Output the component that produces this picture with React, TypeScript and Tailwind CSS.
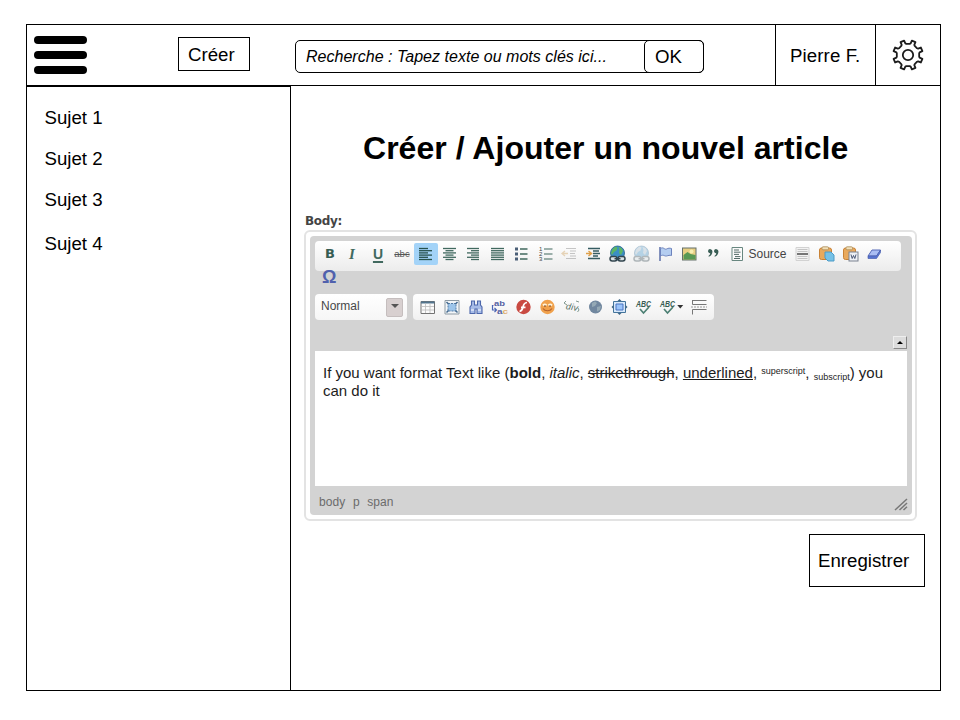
import React from 'react';

const sans = "font-['Liberation_Sans',Arial,sans-serif]";

function Icon({ children, className = '' }: { children: React.ReactNode; className?: string }) {
  return (
    <svg viewBox="0 0 24 24" className={`h-6 w-6 shrink-0 ${className}`} fill="none">
      {children}
    </svg>
  );
}

const G = '#41695f';

function Lines({ rows, color = G }: { rows: [number, number][]; color?: string }) {
  return (
    <Icon>
      {rows.map(([a, b], i) => (
        <path key={i} d={`M${a} ${6.5 + i * 2.2}H${b}`} stroke={color} strokeWidth="1.3" />
      ))}
    </Icon>
  );
}

function Globe({ faded = false }: { faded?: boolean }) {
  return (
    <Icon className={faded ? 'opacity-35' : ''}>
      <circle cx="11.500" cy="11" r="7" fill="#3b8fc4" stroke="#235e8c" strokeWidth=".8" />
      <path d="M6.500 7l3-2.400 2 1-1 3-2.500 1.500-2 3-1-2zM12.500 5l3 1 1.500 3-2 4-2-2 .5-3z" fill={faded ? '#9fb7c9' : '#5cb565'} />
      <rect x="4" y="14.500" width="7" height="4.500" rx="2.200" fill="#d9e2e5" stroke="#33464f" strokeWidth="1.500" />
      <rect x="12" y="14.500" width="7" height="4.500" rx="2.200" fill="#d9e2e5" stroke="#33464f" strokeWidth="1.500" />
      <path d="M8.500 16.700h6" stroke="#33464f" strokeWidth="1.500" />
    </Icon>
  );
}

function SpellText() {
  return (
    <>
      <text x="11.500" y="12" textAnchor="middle" fontSize="9" fontWeight="700" fontStyle="italic" textLength="15" lengthAdjust="spacingAndGlyphs" fill="#365c52">ABC</text>
      <path d="M8 14l3.500 4 5.500-6" stroke="#4d8074" strokeWidth="1.700" />
    </>
  );
}

function Clipboard({ word = false }: { word?: boolean }) {
  return (
    <Icon>
      <rect x="4.500" y="6" width="12" height="11.500" rx="2" fill="#e9a95c" stroke="#c98235" />
      <rect x="7" y="4.800" width="6.500" height="3" rx="1" fill="#f2e0b8" stroke="#a98a58" strokeWidth=".8" />
      {word ? (
        <>
          <rect x="10" y="10" width="9" height="9" fill="#eef0f4" stroke="#7b8290" />
          <path d="M12 12.500l1.200 4 1.300-3 1.300 3 1.200-4" stroke="#4b5875" />
        </>
      ) : (
        <path d="M10 10h6l3 3v6h-6l-3-3z" fill="#76c1e6" stroke="#4c9bc7" />
      )}
    </Icon>
  );
}

function Gear() {
  const pts: string[] = [];
  for (let i = 0; i < 8; i++) {
    const base = i * 45 + 22.5;
    for (const [off, r] of [[-14, 11.3], [-9.5, 11.9], [-7.5, 14.9], [7.5, 14.9], [9.5, 11.9], [14, 11.3]]) {
      const a = ((base + off) * Math.PI) / 180;
      pts.push(`${(16 + r * Math.cos(a)).toFixed(2)},${(16 + r * Math.sin(a)).toFixed(2)}`);
    }
  }
  return (
    <svg viewBox="0 0 32 32" className="h-8 w-8" fill="none" stroke="#1c1c1c" strokeWidth="1.8" strokeLinejoin="round">
      <polygon points={pts.join(' ')} />
      <circle cx="16" cy="16" r="5.2" />
    </svg>
  );
}

function MainTools() {
  return (
    <div className="flex h-[30px] w-[586px] items-center rounded-[4px] bg-linear-to-b from-white to-[#ececec] pl-[3px] pb-[4px]">
      <span className="w-6 text-center font-['DejaVu_Sans',sans-serif] text-[13px] font-bold leading-6 text-[#365c52]">B</span>
      <span className="w-6 pr-1 text-center font-['Liberation_Serif',serif] text-[15px] font-bold italic leading-6 text-[#41695f]">I</span>
      <span className="w-6 text-center text-[14px] font-bold leading-6 text-[#41695f] underline decoration-[1.5px] underline-offset-2">U</span>
      <span className="w-6 text-center text-[9.500px] leading-6 text-[#555] line-through">abc</span>
      <span className="flex h-[22px] w-6 items-center rounded-[2px] bg-[#a3d3f8]">
        <Lines rows={[[5, 14], [5, 18], [5, 14], [5, 18], [5, 14], [5, 18]]} color="#26514c" />
      </span>
      <Lines rows={[[5, 18], [7.5, 15.5], [5, 18], [7.5, 15.5], [5, 18], [7.5, 15.5]]} />
      <Lines rows={[[5, 17], [9, 17], [5, 17], [9, 17], [5, 17], [9, 17]]} />
      <Lines rows={[[5, 18], [5, 18], [5, 18], [5, 18], [5, 18], [5, 18]]} />
      <Icon>
        <path d="M10 7h7.500M10 12h7.500M10 17h7.500" stroke={G} strokeWidth="1.300" />
        <path d="M5 5.500h3v3H5zM5 10.500h3v3H5zM5 15.500h3v3H5z" fill="#4b5f77" />
      </Icon>
      <Icon>
        <path d="M10 7h8.500M10 12h8.500M10 17h8.500" stroke={G} strokeWidth="1.200" />
        <text x="5" y="9" fontSize="6" fill="#444">1</text>
        <text x="5" y="14" fontSize="6" fill="#444">2</text>
        <text x="5" y="19" fontSize="6" fill="#444">3</text>
      </Icon>
      <Icon className="opacity-35">
        <path d="M8 6.500h10M12 9h6M12 11.500h5M12 14h6M8 16.500h10" stroke="#666" strokeWidth="1.200" />
        <path d="M10 11.500H5M7 9l-3 2.500 3 2.500" stroke="#c99342" strokeWidth="1.300" />
      </Icon>
      <Icon>
        <path d="M6 6.500h12M11 9h6M11 11.500h7M11 14h5M6 16.500h12" stroke="#365c62" strokeWidth="1.300" />
        <path d="M4 11.500h5M6.500 9l3 2.500-3 2.500" stroke="#dfa04a" strokeWidth="1.500" />
      </Icon>
      <Globe />
      <Globe faded />
      <Icon>
        <path d="M6 5v14" stroke="#5c6fa8" strokeWidth="1.500" />
        <path d="M6.500 6.500c3-2 4 1.500 6 .5s3-1 5-.5v7c-2-.5-3 0-5 .5s-3-2-6 0z" fill="#b4cdf0" stroke="#6d83bd" />
      </Icon>
      <Icon>
        <rect x="4.500" y="6" width="13.500" height="12" fill="#e8cf82" stroke="#65716b" />
        <path d="M5.500 13l4-3 3 2 5 1v4.500h-12z" fill="#599954" />
        <circle cx="13.500" cy="9.500" r="2" fill="#f7efb1" />
      </Icon>
      <Icon>
        <path d="M6 9a2.200 2.200 0 1 1 4.400.7c0 2.500-1.600 4.200-3.600 5l-.3-.8c1-.7 1.700-1.600 1.700-2.700C6.800 11.200 6 10.200 6 9zM12 9a2.200 2.200 0 1 1 4.400.7c0 2.500-1.600 4.200-3.600 5l-.3-.8c1-.7 1.700-1.600 1.700-2.700-1.400 0-2.200-1-2.200-2.200z" fill="#395e55" />
      </Icon>
      <Icon>
        <path d="M6 5.500h10.500v13H6z" fill="#fafafa" stroke="#688780" />
        <path d="M8 8h5M8 10.200h6.500M8 12.400h5M9 14.600h5.500M8 16.500h6" stroke="#536b67" />
      </Icon>
      <span className="ml-[-1.500px] w-[42.500px] shrink-0 text-[12px] leading-6 text-[#444]">Source</span>
      <Icon>
        <path d="M5 5.500h13v13H5z" fill="#f2f2f2" stroke="#d2d2d2" />
        <path d="M6.500 7.500h10M6.500 9.500h10M6.500 14.500h10M6.500 16.500h10" stroke="#b8b8b8" strokeWidth=".8" />
        <path d="M6 12h11" stroke="#555" strokeWidth="1.600" />
      </Icon>
      <Clipboard />
      <Clipboard word />
      <Icon>
        <path d="M9 8h8.500l-4 6H5z" fill="#a9bdf3" stroke="#566ab8" />
        <path d="M5 14h8.500l4-6v2.500l-4 6H5z" fill="#5674d3" stroke="#4b60ae" strokeWidth=".7" />
      </Icon>
    </div>
  );
}

function ExtraTools() {
  return (
    <div className="flex h-[26px] w-[301px] items-center rounded-[4px] bg-linear-to-b from-white to-[#f0f0f0] pl-[2.500px]">
      <Icon>
        <path d="M5 6.500h13.500v12H5z" fill="#fbfbfb" stroke="#737373" />
        <path d="M5 7.500h13.500" stroke="#52758e" strokeWidth="2" />
        <path d="M9.500 8v10M14 8v10M5.500 11.500H18M5.500 15H18" stroke="#bbb" strokeWidth=".8" />
      </Icon>
      <Icon>
        <path d="M5 5.500h14v13.500H5z" fill="#f3f6f8" stroke="#8d9aa4" />
        <path d="M8 8.500h8v7.500H8z" fill="#9dc5ea" stroke="#557da7" strokeDasharray="2 1" />
        <path d="M6.500 7l2 2m9-2l-2 2m-9 8.500l2-2m9 2l-2-2" stroke="#456a8e" strokeWidth="1.500" />
      </Icon>
      <Icon>
        <path d="M7.500 6h3v4h3V6h3v4l1.500 2v6.500h-5V14h-2v4.500H6V12l1.500-2z" fill="#a7bce8" stroke="#4d67ab" strokeWidth="1.100" />
        <path d="M7 15h3M14 15h3" stroke="#fff" />
      </Icon>
      <Icon>
        <text x="6" y="10.500" fontSize="8" fontWeight="700" textLength="11" lengthAdjust="spacingAndGlyphs" fill="#5562a3">ab</text>
        <text x="9" y="19" fontSize="8" fontWeight="700" textLength="11" lengthAdjust="spacingAndGlyphs" fill="#5562a3">a<tspan fill="#dfad70">c</tspan></text>
        <path d="M5.500 10.500H4.500V15h4M6.500 12.800l2 2.200-2 2.200" stroke="#4b65b5" strokeWidth="1.200" />
      </Icon>
      <Icon>
        <circle cx="11.500" cy="12" r="7.200" fill="#c94a42" />
        <path d="M15 7.500c-3 .3-3.500 2-4 4.500s-1 4-3.500 4.500M9 12.300h4.500" stroke="#fff" strokeWidth="1.700" />
      </Icon>
      <Icon>
        <circle cx="11.500" cy="12" r="7.200" fill="#f0a14c" />
        <path d="M7 10.500c1-1 2.500-1 3.500 0M12.500 10.500c1-1 2.500-1 3.500 0" stroke="#fff3d8" strokeWidth="2" />
        <path d="M7 13.500c2 3 7 3 9 0" stroke="#b4622c" strokeWidth="1.200" />
        <circle cx="9" cy="11" r=".8" fill="#643018" /><circle cx="14" cy="11" r=".8" fill="#643018" />
      </Icon>
      <Icon>
        <path d="M6 6L4 8l3 2M16 6l3 1M18 13l1 2-1.500 2" stroke="#829990" />
        <text x="6" y="15" fontSize="9" fontStyle="italic" textLength="12" fill="#587268" transform="rotate(10 12 12)">div</text>
      </Icon>
      <Icon>
        <circle cx="11.500" cy="12" r="6.500" fill="#71879f" />
        <path d="M8 8l3-1.500 2 1.500-2 3-3 1zM13 12l4-1-1 4-3 1.500z" fill="#95a9b5" />
      </Icon>
      <Icon>
        <path d="M5.500 6.500h12v11h-12z" stroke="#44749b" fill="#d7e8fa" />
        <path d="M8 9h7v6H8z" fill="#9bc4fa" stroke="#4a75c0" />
        <path d="M11.500 4l2 2h-4zM11.500 20l2-2h-4zM3.500 12l2-2v4zM19.500 12l-2-2v4z" fill="#3d6484" />
      </Icon>
      <Icon><SpellText /></Icon>
      <Icon><SpellText /></Icon>
      <svg viewBox="0 0 7 24" className="-ml-[2.500px] h-6 w-[9.500px] shrink-0"><path d="M-1 10h6l-3 3.500z" fill="#333" /></svg>
      <Icon>
        <path d="M5.500 5v4.500h14M19.500 5.500h-14M5.500 19.500v-5h14" stroke="#777" />
        <path d="M4 12h16" stroke="#999" strokeDasharray="2 1" />
      </Icon>
    </div>
  );
}

function Editor() {
  return (
    <div className="h-[291px] w-[613px] rounded-[6px] border-2 border-[#e3e3e3] bg-white p-[4px]">
      <div className="flex h-[279px] w-[602px] flex-col rounded-[4px] bg-[#d3d3d3] pl-[5px] pt-[5px]">
        <MainTools />
        <div className="h-[23px] pl-[7px] text-[18px] font-bold leading-[12px] text-[#5061ad]">Ω</div>
        <div className="flex gap-[6px]">
          <div className="flex h-[26px] w-[92px] items-center justify-between rounded-[4px] bg-linear-to-b from-white to-[#f6f6f6] pl-[6px] pr-1">
            <span className="pb-[2px] text-[12px] leading-none text-[#484848]">Normal</span>
            <span className="flex h-[19px] w-[17px] items-center justify-center rounded-[2px] border border-[#c5bebe] bg-[#d8d0d0]">
              <svg viewBox="0 0 8 4" className="mb-[2px] h-1 w-2"><path d="M0 0h8L4 4z" fill="#555" /></svg>
            </span>
          </div>
          <ExtraTools />
        </div>
        <div className="flex h-[31px] justify-end pr-[5px] pt-4">
          <span className="flex h-[13px] w-[14px] items-center justify-center border border-t-[#eee] border-l-[#eee] border-b-[#888] border-r-[#888] bg-[#dcdcdc]">
            <svg viewBox="0 0 6 3" className="h-[3px] w-[6px]"><path d="M0 3h6L3 0z" fill="#000" /></svg>
          </span>
        </div>
        <div className="h-[135px] w-[592px] whitespace-nowrap bg-white pl-2 pt-[13px] text-[15px] leading-[18px] text-[#1c1c1c]">
          <p className="h-[18px]">
            If you want format Text like (<b>bold</b>, <i>italic</i>, <s>strikethrough</s>, <u>underlined</u>,{' '}
            <sup className="text-[9px] leading-none">superscript</sup>, <sub className="text-[9px] leading-none">subscript</sub>) you
          </p>
          <p>can do it</p>
        </div>
        <div className="flex h-[29px] items-center justify-between pl-1 pr-1 pt-[2px] text-[12px] text-[#6b6b6b]">
          <span className="flex gap-[7.500px] tracking-[0.1px]"><span>body</span><span>p</span><span>span</span></span>
          <svg viewBox="0 0 14 14" className="mt-1 h-[14px] w-[14px]" stroke="#777" strokeWidth="1.500"><path d="M1 13L13 2M5.500 13L13 6M9.500 13L13 9.800" /></svg>
        </div>
      </div>
    </div>
  );
}

export default function App() {
  return (
    <div className={`h-[720px] w-[960px] bg-white pl-[26px] pt-6 text-[18.67px] text-black ${sans}`}>
      <div className="flex h-[667px] w-[915px] flex-col border border-black">
        <header className="flex h-[61px] shrink-0 border-b border-black">
          <div className="flex w-[151px] flex-col gap-[7px] pl-[7px] pt-[11px]">
            <span className="h-2 w-[53px] rounded-full bg-black" />
            <span className="h-2 w-[53px] rounded-full bg-black" />
            <span className="h-2 w-[53px] rounded-full bg-black" />
          </div>
          <button className="mt-3 h-[34px] w-[72px] border border-black pl-[9px] pt-[2px] text-left">Créer</button>
          <div className="ml-[45px] mt-[15px] flex h-[33px] w-[409px] rounded-[5px] border border-black">
            <div className="w-[348px] pl-[10px] text-[16px] italic leading-[32px] tracking-[0.02px]">Recherche : Tapez texte ou mots clés ici...</div>
            <button className="-my-px -mr-px h-[33px] w-[60px] rounded-[5px] border border-black pl-[10px] pt-px text-left">OK</button>
          </div>
          <div className="ml-[71px] w-[101px] border-x border-black pl-[14px] leading-[62px] tracking-[0.1px]">Pierre F.</div>
          <div className="flex flex-1 items-center justify-center"><Gear /></div>
        </header>
        <div className="flex flex-1">
          <nav className="w-[264px] border-r border-t border-black pl-[17.500px] pt-[19px]">
            <div className="h-[41px] leading-[23px]">Sujet 1</div>
            <div className="h-[41px] leading-[23px]">Sujet 2</div>
            <div className="h-[44px] leading-[23px]">Sujet 3</div>
            <div className="leading-[23px]">Sujet 4</div>
          </nav>
          <main className="flex flex-1 flex-col pl-[13px]">
            <h1 className="ml-[59px] mt-[42px] text-[32px] font-bold leading-10 tracking-[0.03px]">Créer / Ajouter un nouvel article</h1>
            <div className="mt-[44px] h-[18px] pl-px font-['DejaVu_Sans',sans-serif] text-[12px] font-bold leading-[18px] tracking-[-0.3px] text-[#444]">Body:</div>
            <Editor />
            <button className="ml-[505px] mt-[13px] h-[53px] w-[116px] border border-black pl-2 text-left">Enregistrer</button>
          </main>
        </div>
      </div>
    </div>
  );
}
